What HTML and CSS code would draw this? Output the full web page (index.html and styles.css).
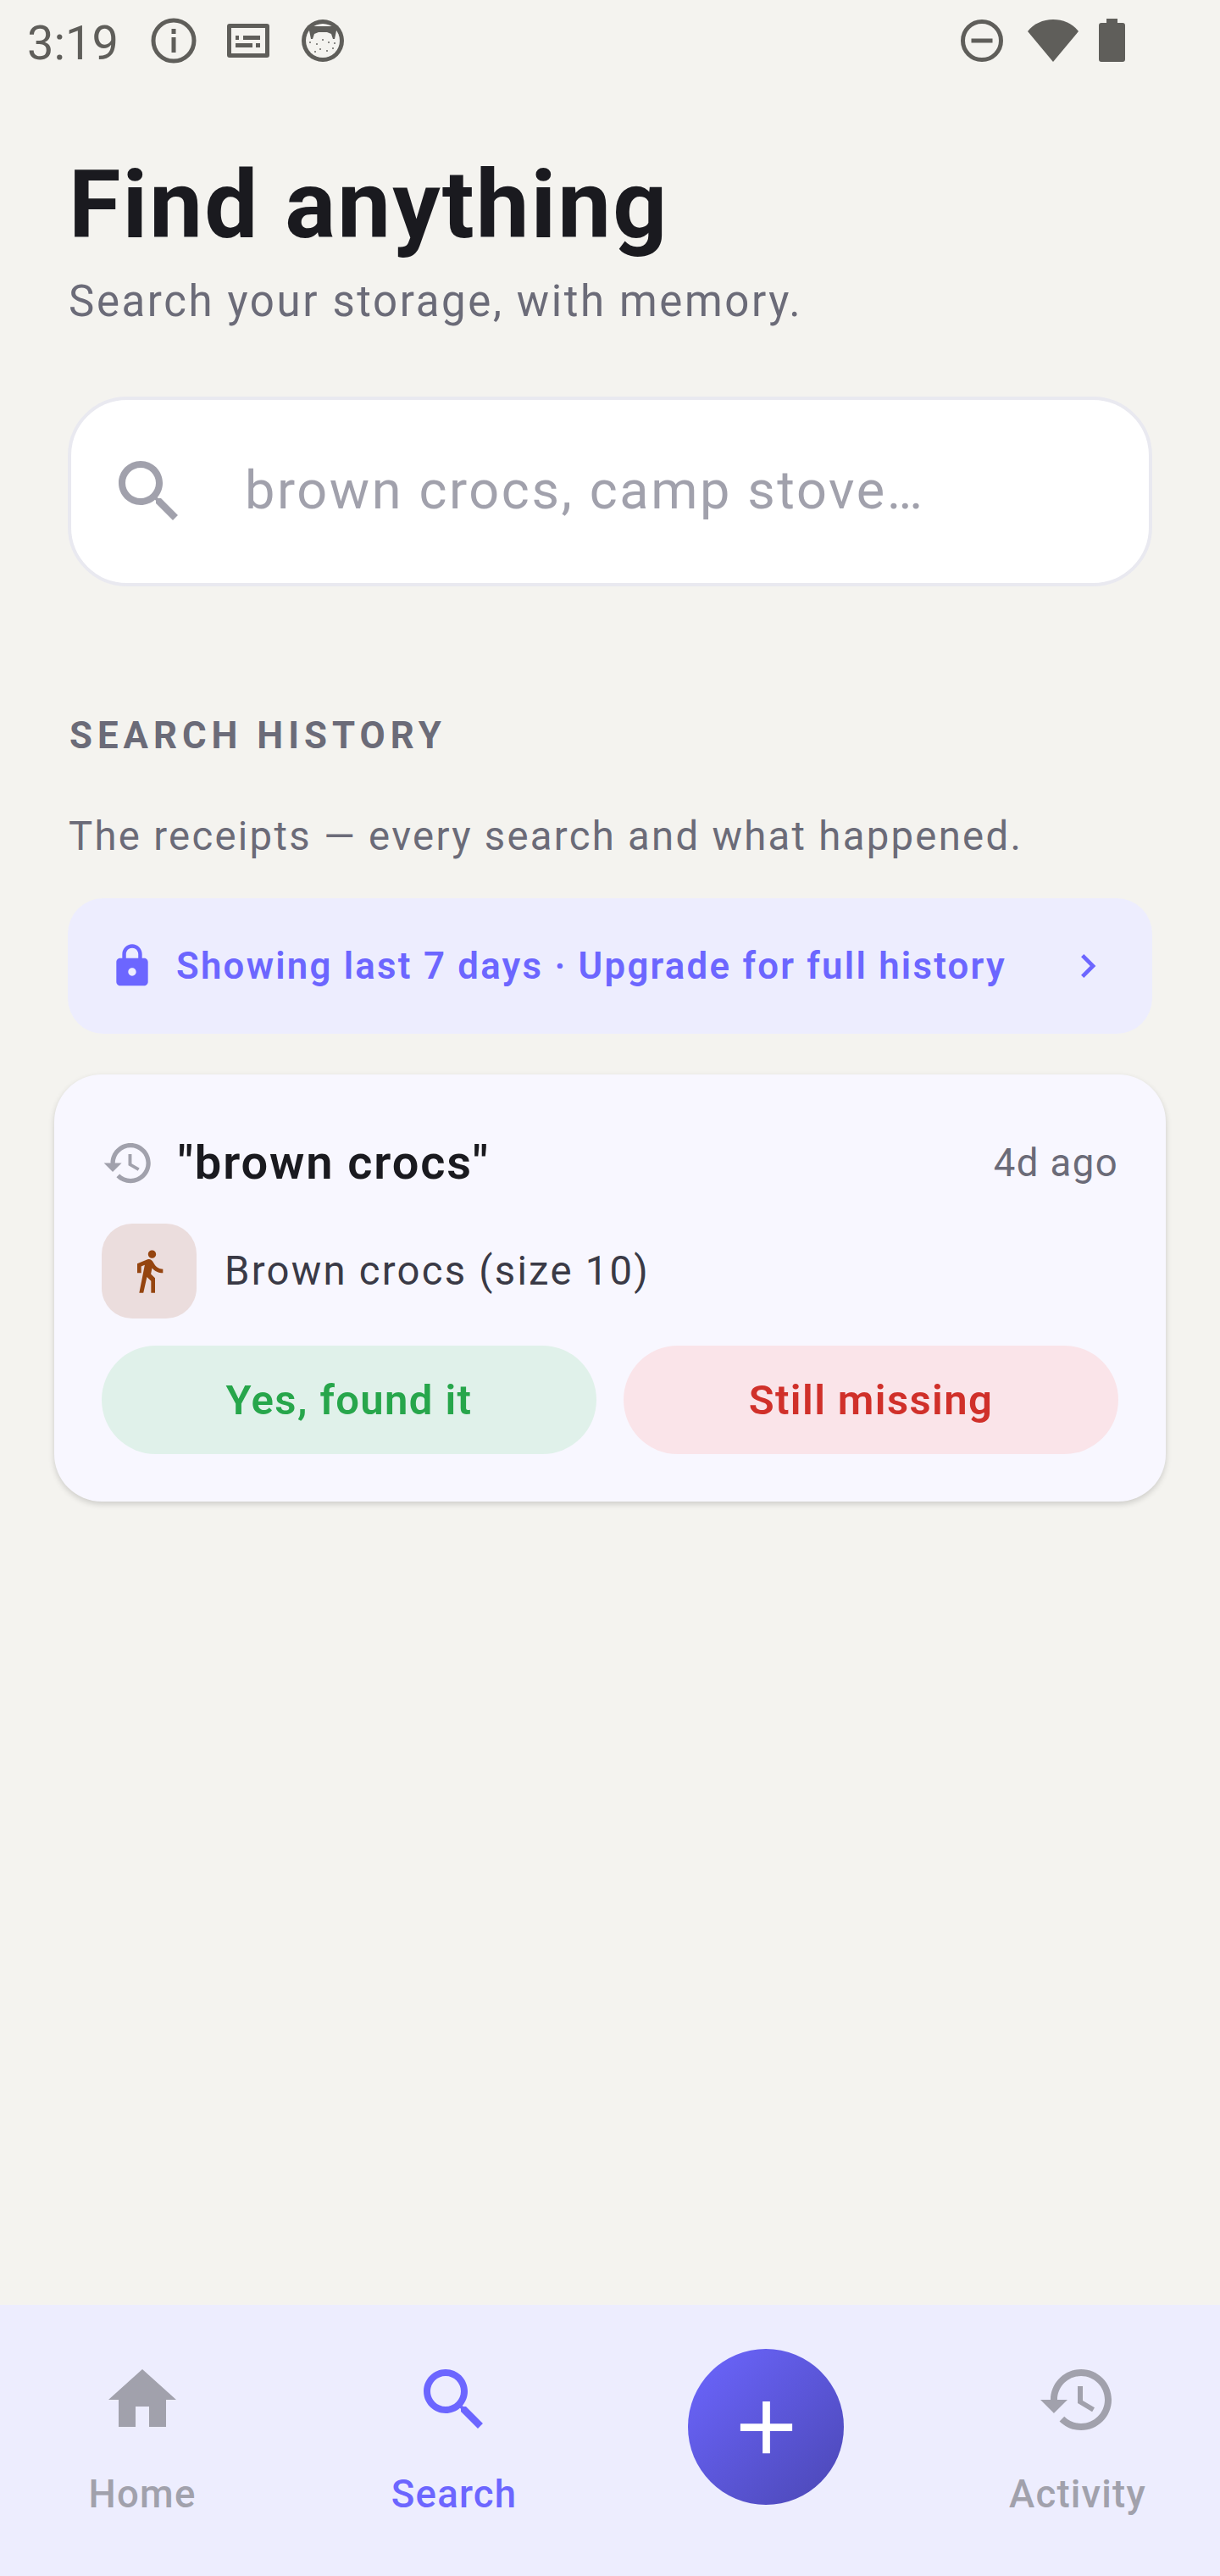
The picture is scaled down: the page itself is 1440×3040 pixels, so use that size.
FILE: index.html
```html
<!DOCTYPE html>
<html lang="en">
<head>
<meta charset="utf-8">
<title>Find anything</title>
<link rel="stylesheet" href="styles.css">
</head>
<body>
<div class="app">
  <header class="status">
    <span class="clock">3:19</span>
    <svg class="st-info" viewBox="0 0 54 54"><circle cx="27" cy="27" r="24" fill="none" stroke="#5f5e5a" stroke-width="5"/><rect x="24.5" y="13" width="5" height="6" fill="#5f5e5a"/><rect x="24.5" y="23" width="5" height="18" fill="#5f5e5a"/></svg>
    <svg class="st-sub" viewBox="0 0 50 40"><path fill-rule="evenodd" fill="#5f5e5a" d="M3 0h44a3 3 0 0 1 3 3v34a3 3 0 0 1-3 3H3a3 3 0 0 1-3-3V3a3 3 0 0 1 3-3zm2 5v30h40V5z"/><rect x="10" y="14" width="4" height="5" fill="#5f5e5a"/><rect x="19" y="14" width="20" height="5" fill="#5f5e5a"/><rect x="10" y="23" width="20" height="5" fill="#5f5e5a"/><rect x="34" y="23" width="5" height="5" fill="#5f5e5a"/></svg>
    <svg class="st-cookie" viewBox="0 0 50 50"><circle cx="25" cy="25" r="25" fill="#5f5e5a"/><circle cx="25" cy="25" r="20" fill="#f4f3ef"/><path fill="#5f5e5a" d="M8 8H42L39 23H37L35 17 30 15H20L15 17 13 23H11z"/><g fill="#8a8985"><rect x="9" y="26" width="2" height="2"/><rect x="17" y="28" width="2" height="2"/><rect x="24" y="23" width="2" height="2"/><rect x="31" y="26" width="2" height="2"/><rect x="38" y="27" width="2" height="2"/><rect x="21" y="34" width="2" height="2"/><rect x="29" y="36" width="2" height="2"/><rect x="36" y="33" width="2" height="2"/><rect x="15" y="37" width="2" height="2"/></g></svg>
    <span class="st-spacer"></span>
    <svg class="st-dnd" viewBox="0 0 50 50"><circle cx="25" cy="25" r="22.5" fill="none" stroke="#5f5e5a" stroke-width="5"/><rect x="12.5" y="22.5" width="25" height="5" fill="#5f5e5a"/></svg>
    <svg class="st-wifi" viewBox="0 0 60 50"><path fill="#5f5e5a" d="M0 14C7 5 18 0 30 0s23 5 30 14L30 50z"/></svg>
    <svg class="st-batt" viewBox="0 0 31 51"><path fill="#5f5e5a" d="M9 0h13v5h6a3 3 0 0 1 3 3v40a3 3 0 0 1-3 3H3a3 3 0 0 1-3-3V8a3 3 0 0 1 3-3h6z"/></svg>
  </header>

  <main class="content">
    <h1 class="title">Find anything</h1>
    <p class="subtitle">Search your storage, with memory.</p>

    <div class="searchbox">
      <svg class="ic-96 c-muted" viewBox="0 0 24 24"><path d="M15.5 14h-.79l-.28-.27C15.41 12.59 16 11.11 16 9.5 16 5.91 13.09 3 9.5 3S3 5.91 3 9.5 5.91 16 9.5 16c1.61 0 3.09-.59 4.23-1.57l.27.28v.79l5 4.99L20.49 19l-4.99-5zm-6 0C7.01 14 5 11.99 5 9.5S7.01 5 9.5 5 14 7.01 14 9.5 11.99 14 9.5 14z"/></svg>
      <span class="placeholder">brown crocs, camp stove…</span>
    </div>

    <h2 class="section-label">SEARCH HISTORY</h2>
    <p class="section-desc">The receipts — every search and what happened.</p>

    <div class="banner">
      <svg class="ic-lock c-accent" viewBox="0 0 24 24"><path d="M18 8h-1V6c0-2.76-2.24-5-5-5S7 3.24 7 6v2H6c-1.1 0-2 .9-2 2v10c0 1.1.9 2 2 2h12c1.1 0 2-.9 2-2V10c0-1.1-.9-2-2-2zm-6 9c-1.1 0-2-.9-2-2s.9-2 2-2 2 .9 2 2-.9 2-2 2zm3.1-9H8.9V6c0-1.71 1.39-3.1 3.1-3.1 1.71 0 3.1 1.39 3.1 3.1v2z"/></svg>
      <span class="banner-text">Showing last 7 days · Upgrade for full history</span>
      <svg class="ic-chev c-accent" viewBox="0 0 24 24"><path d="M10 6L8.59 7.41 13.17 12l-4.58 4.59L10 18l6-6z"/></svg>
    </div>

    <section class="card">
      <div class="card-head">
        <svg class="ic-hist c-muted" viewBox="0 0 24 24"><path d="M13 3c-4.97 0-9 4.03-9 9H1l3.89 3.89.07.14L9 12H6c0-3.87 3.13-7 7-7s7 3.13 7 7-3.13 7-7 7c-1.93 0-3.68-.79-4.94-2.06l-1.42 1.42C8.27 19.99 10.51 21 13 21c4.97 0 9-4.03 9-9s-4.03-9-9-9zm-1 5v5l4.28 2.54.72-1.21-3.5-2.08V8H12z"/></svg>
        <span class="query">"brown crocs"</span>
        <span class="ago">4d ago</span>
      </div>
      <div class="item">
        <div class="thumb">
          <svg class="ic-walk" viewBox="0 0 24 24"><path d="M13.5 5.5c1.1 0 2-.9 2-2s-.9-2-2-2-2 .9-2 2 .9 2 2 2zM9.8 8.9L7 23h2.1l1.8-8 2.1 2v6h2v-7.5l-2.1-2 .6-3C14.8 12 16.8 13 19 13v-2c-1.9 0-3.5-1-4.3-2.4l-1-1.6c-.4-.6-1-1-1.7-1-.3 0-.5.1-.8.1L6 8.3V13h2V9.6l1.8-.7"/></svg>
        </div>
        <span class="item-name">Brown crocs (size 10)</span>
      </div>
      <div class="actions">
        <button class="btn btn-yes">Yes, found it</button>
        <button class="btn btn-no">Still missing</button>
      </div>
    </section>
  </main>

  <nav class="nav">
    <div class="tab">
      <svg class="ic-96 c-muted" viewBox="0 0 24 24"><path d="M10 20v-6h4v6h5v-8h3L12 3 2 12h3v8z"/></svg>
      <span class="tab-label">Home</span>
    </div>
    <div class="tab tab-active">
      <svg class="ic-96 c-accent" viewBox="0 0 24 24"><path d="M15.5 14h-.79l-.28-.27C15.41 12.59 16 11.11 16 9.5 16 5.91 13.09 3 9.5 3S3 5.91 3 9.5 5.91 16 9.5 16c1.61 0 3.09-.59 4.23-1.57l.27.28v.79l5 4.99L20.49 19l-4.99-5zm-6 0C7.01 14 5 11.99 5 9.5S7.01 5 9.5 5 14 7.01 14 9.5 11.99 14 9.5 14z"/></svg>
      <span class="tab-label">Search</span>
    </div>
    <div class="tab tab-fab">
      <div class="fab">
        <svg class="ic-add" viewBox="0 0 24 24"><path d="M19 13h-6v6h-2v-6H5v-2h6V5h2v6h6v2z"/></svg>
      </div>
    </div>
    <div class="tab">
      <svg class="ic-96 c-muted" viewBox="0 0 24 24"><path d="M13 3c-4.97 0-9 4.03-9 9H1l3.89 3.89.07.14L9 12H6c0-3.87 3.13-7 7-7s7 3.13 7 7-3.13 7-7 7c-1.93 0-3.68-.79-4.94-2.06l-1.42 1.42C8.27 19.99 10.51 21 13 21c4.97 0 9-4.03 9-9s-4.03-9-9-9zm-1 5v5l4.28 2.54.72-1.21-3.5-2.08V8H12z"/></svg>
      <span class="tab-label">Activity</span>
    </div>
  </nav>
</div>
</body>
</html>
```

FILE: styles.css
```css
* { box-sizing: border-box; }
html, body { margin: 0; padding: 0; }
body { font-family: Roboto, "Liberation Sans", sans-serif; background: #f4f3ef; }
svg { display: block; flex: none; }
.app { width: 1440px; height: 3040px; display: flex; flex-direction: column; }

.status { height: 100px; display: flex; align-items: flex-start; padding: 21px 0 0 32px; color: #5f5e5a; }
.clock { font-size: 56px; line-height: 56px; font-weight: 400; width: 146px; margin-top: 2px; }
.st-info { width: 54px; height: 54px; }
.st-sub { width: 50px; height: 40px; margin: 7px 0 0 36px; }
.st-cookie { width: 50px; height: 50px; margin: 2px 0 0 38px; }
.st-spacer { flex: 1; }
.st-dnd { width: 50px; height: 50px; margin-top: 2px; }
.st-wifi { width: 60px; height: 50px; margin: 2px 0 0 29px; }
.st-batt { width: 31px; height: 51px; margin: 1px 112px 0 24px; }

.content { flex: 1; padding: 76px 64px 0; }
.title { margin: 0 17px; font-size: 112px; line-height: 132px; font-weight: 700; letter-spacing: 2.1px; color: #1a1a1f; }
.subtitle { margin: 12px 17px 0; font-size: 51px; line-height: 72px; letter-spacing: 2.6px; color: #6b6b78; }

.searchbox { margin: 76px 16px 0; height: 224px; background: #fff; border: 4px solid #e9e9f0; border-radius: 70px; display: flex; align-items: center; padding-left: 44px; }
.ic-96 { width: 96px; height: 96px; }
.c-muted { fill: #a1a1ac; }
.c-accent { fill: #6c66ff; }
.placeholder { margin: 0 0 4px 65px; font-size: 63px; letter-spacing: 2.6px; color: #a1a1ac; }

.section-label { margin: 146px 18px 0; font-size: 43.75px; line-height: 60px; font-weight: 700; letter-spacing: 6px; color: #6b6b78; }
.section-desc { margin: 55px 17px 0; font-size: 47.25px; line-height: 68px; letter-spacing: 2.3px; color: #6b6b78; }

.banner { margin: 39px 16px 0; height: 160px; background: #ededfe; border-radius: 42px; display: flex; align-items: center; padding: 0 48px; }
.ic-lock { width: 56px; height: 56px; }
.banner-text { flex: 1; margin-left: 24px; font-size: 43.75px; font-weight: 600; letter-spacing: 2.25px; color: #6c66ff; }
.ic-chev { width: 56px; height: 56px; }

.card { margin-top: 48px; padding: 56px; height: 504px; background: #f8f7ff; border-radius: 56px; box-shadow: 0 3px 7px rgba(0,0,0,.16); }
.card-head { height: 96px; display: flex; align-items: center; }
.ic-hist { width: 63px; height: 63px; }
.query { flex: 1; margin-left: 27px; font-size: 56px; font-weight: 600; letter-spacing: 1.9px; color: #1a1a1f; }
.ago { font-size: 45.5px; letter-spacing: 1.4px; color: #6b6b78; }
.item { margin-top: 24px; display: flex; align-items: center; }
.thumb { width: 112px; height: 112px; border-radius: 36px; background: #ebdddd; display: flex; align-items: center; justify-content: center; }
.ic-walk { width: 56px; height: 56px; fill: #954510; }
.item-name { margin-left: 33px; font-size: 47.25px; letter-spacing: 2.25px; color: #3a3a46; }
.actions { margin-top: 32px; display: grid; grid-template-columns: 1fr 1fr; gap: 32px; }
.btn { height: 128px; border: 0; border-radius: 64px; font-family: inherit; font-size: 49px; font-weight: 600; letter-spacing: 1.4px; }
.btn-yes { background: #e0f1ea; color: #27a64b; }
.btn-no { background: #fae4e9; color: #d0302a; }

.nav { height: 320px; background: #ededfe; display: grid; grid-template-columns: repeat(4, 1fr); column-gap: 32px; }
.tab { display: flex; flex-direction: column; align-items: center; padding-top: 64px; color: #a1a1ac; }
.tab-label { margin-top: 36px; font-size: 45.5px; line-height: 56px; font-weight: 500; letter-spacing: 1.2px; }
.tab-active { color: #6c66ff; }
.tab-fab { padding-top: 52px; }
.fab { width: 184px; height: 184px; border-radius: 50%; background: linear-gradient(135deg, #6c66ff, #4b47b4); display: flex; align-items: center; justify-content: center; }
.ic-add { width: 105px; height: 105px; fill: #fff; }
```
